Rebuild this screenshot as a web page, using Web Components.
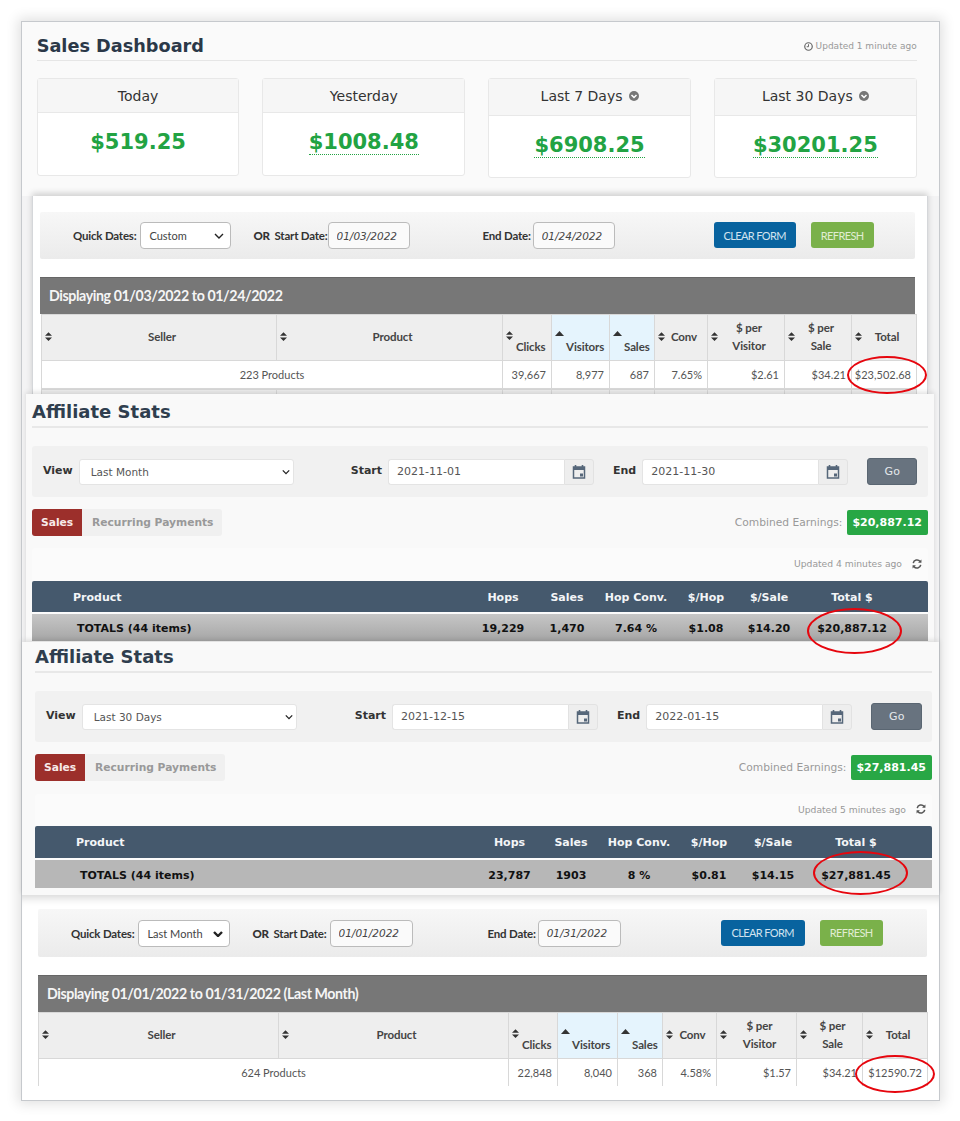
<!DOCTYPE html>
<html lang="en">
<head>
<meta charset="utf-8">
<title>Sales Dashboard</title>
<style>
	html, body { margin: 0; background: #fff; }
	body { padding: 21px 20px 20px 21px; width: 919px; font-family: "DejaVu Sans", sans-serif; }
</style>
</head>
<body>
<proof-frame>
	<sales-dashboard></sales-dashboard>

	<date-sheet style="--sheet-h:198px;--sheet-ml:10px;--sheet-mr:11px;--sheet-top:16px;--pad-l:7px;--pad-r:12px;--bar-h:47px;--lead:33px;--sel-w:91px;--date-w:82px;--end-gap:73px;--btn-gap:99px;--clear-w:82px;--or-gap:22px;--or-adj:-2px;--sheet-line:1px;--table-ml:1px"
		quick="Custom" start="01/03/2022" end="01/24/2022"
		heading="Displaying 01/03/2022 to 01/24/2022"
		cols="235,226,49,58,45,53,77,67,65"
		products="223 Products"
		row="39,667|8,977|687|7.65%|$2.61|$34.21|$23,502.68"
		more></date-sheet>

	<affiliate-stats style="--aff-h:248px;--aff-ml:4px;--aff-mr:5px;--aff-pl:6px;--aff-pr:6px;--title-top:6px;--head-h:31px;--tot-h:27px;--tot-bg:linear-gradient(#c6c6c6,#a6a6a6);--card-top:12px;--card-h:33px;--start-ml:57px;--picker-w:206px;--go-w:50px"
		view="Last Month" start="2021-11-01" end="2021-11-30" earnings="$20,887.12"
		updated="Updated 4 minutes ago" cols="440,62,66,72,68,58,108,1fr"
		row="19,229|1,470|7.64 %|$1.08|$14.20|$20,887.12"></affiliate-stats>

	<affiliate-stats style="--aff-h:253px;--aff-ml:0px;--aff-mr:0px;--aff-pl:13px;--aff-pr:7px;--title-top:3px;--head-h:32px;--tot-h:28px;--tot-bg:#b7b7b7;--card-top:13px;--card-h:32px;--start-ml:58px;--picker-w:206px;--go-w:51px"
		view="Last 30 Days" start="2021-12-15" end="2022-01-15" earnings="$27,881.45"
		updated="Updated 5 minutes ago" cols="443,63,60,76,64,64,102,1fr"
		row="23,787|1903|8 %|$0.81|$14.15|$27,881.45"></affiliate-stats>

	<date-sheet style="--sheet-h:205px;--sheet-ml:0px;--sheet-mr:0px;--sheet-top:14px;--pad-l:16px;--pad-r:12px;--bar-h:48px;--lead:33px;--sel-w:92px;--date-w:83px;--end-gap:75px;--btn-gap:100px;--clear-w:84px;--or-gap:22px;--or-adj:1px;--sheet-line:0px;--table-ml:0px;--sheet-inset:inset 0 10px 9px -7px rgba(0,0,0,.16)"
		quick="Last Month" start="01/01/2022" end="01/31/2022" bold-arrow
		heading="Displaying 01/01/2022 to 01/31/2022 (Last Month)"
		cols="240,230,49,60,45,54,80,66,65"
		products="624 Products"
		row="22,848|8,040|368|4.58%|$1.57|$34.21|$12590.72"></date-sheet>

	<red-ring style="left:825px;top:334px;width:76px;height:34px"></red-ring>
	<red-ring style="left:785px;top:586px;width:91px;height:42px"></red-ring>
	<red-ring style="left:791px;top:829px;width:91px;height:40px"></red-ring>
	<red-ring style="left:833px;top:1033px;width:76px;height:34px"></red-ring>
</proof-frame>

<script>
const ICONS = {
	sort: `<svg width="7" height="9" viewBox="0 0 8 10"><path d="M4 0 8 4H0zM0 6h8l-4 4z" fill="#333"/></svg>`,
	sortUp: `<svg width="9" height="5" viewBox="0 0 9 5"><path d="M4.5 0 9 5H0z" fill="#333"/></svg>`,
	clock: `<svg width="9" height="9" viewBox="0 0 12 12"><circle cx="6" cy="6" r="5" fill="none" stroke="#666" stroke-width="1.6"/><path d="M6 3v3.3H3.6" fill="none" stroke="#666" stroke-width="1.3"/></svg>`,
	chevron: `<svg width="10" height="10" viewBox="0 0 10 10"><circle cx="5" cy="5" r="5" fill="#777"/><path d="M2.5 4 5 6.5 7.5 4" fill="none" stroke="#fff" stroke-width="1.5"/></svg>`,
	calendar: `<svg width="14" height="14" viewBox="0 0 14 14"><path d="M3.5 0v2M10.5 0v2" stroke="#56677a" stroke-width="1.6"/><rect x="1.5" y="2" width="11" height="11" fill="none" stroke="#56677a" stroke-width="1.5"/><rect x="1.5" y="2" width="11" height="3" fill="#56677a"/><rect x="8" y="8.5" width="3" height="3" fill="#56677a"/></svg>`,
	refresh: `<svg width="10" height="10" viewBox="0 0 12 12"><path d="M1.5 5A4.6 4.6 0 0 1 9.7 3" fill="none" stroke="#555" stroke-width="1.8"/><path d="M11.3 .6v4H7.3z" fill="#555"/><path d="M10.5 7A4.6 4.6 0 0 1 2.3 9" fill="none" stroke="#555" stroke-width="1.8"/><path d="M.7 11.4v-4h4z" fill="#555"/></svg>`
};

function arrow(width) {
	return `<svg class="arrow" width="10" height="6" viewBox="0 0 10 6"><path d="M1 1l4 4 4-4" fill="none" stroke="#222" stroke-width="${width}"/></svg>`;
}

/* outer box with the shadow, all the crops stack inside it */
class ProofFrame extends HTMLElement {
	constructor() {
		super();
		this.attachShadow({ mode: 'open' }).innerHTML = `
			<style>
				:host {
					display: flex;
					flex-direction: column;
					position: relative;
					box-sizing: border-box;
					height: 1080px;
					border: 1px solid #c6c9cd;
					background: #f3f3f4;
					box-shadow: 0 0 12px 3px rgba(0,0,0,.12);
				}
			</style>
			<slot></slot>`;
	}
}

class RedRing extends HTMLElement {
	constructor() {
		super();
		this.attachShadow({ mode: 'open' }).innerHTML = `
			<style>
				:host {
					display: block;
					position: absolute;
					z-index: 5;
					border: 2.5px solid #e6060e;
					border-radius: 50%;
				}
			</style>`;
	}
}

class StatCard extends HTMLElement {
	constructor() {
		super();
		this.attachShadow({ mode: 'open' });
	}
	connectedCallback() {
		const dropdown = this.hasAttribute('dropdown');
		const dotted = this.hasAttribute('dotted');
		this.shadowRoot.innerHTML = `
			<style>
				:host {
					display: block;
					box-sizing: border-box;
					height: ${dropdown ? 100 : 98}px;
					border: 1px solid #e8e8e8;
					border-radius: 3px;
					background: #fff;
					color: #333;
				}
				.head {
					display: flex;
					align-items: center;
					justify-content: center;
					gap: 6px;
					box-sizing: border-box;
					height: ${dropdown ? 37 : 34}px;
					padding-bottom: ${dropdown ? 2 : 0}px;
					border-bottom: 1px solid #e8e8e8;
					background: #f6f6f6;
					font-size: 14px;
				}
				.body {
					text-align: center;
					padding-top: 17px;
					font-size: 21px;
					line-height: 25px;
					font-weight: bold;
					color: #22a343;
				}
				.dotted { border-bottom: 1px dotted #22a343; }
			</style>
			<div class="head">${this.getAttribute('label')}${dropdown ? ICONS.chevron : ''}</div>
			<div class="body"><span class="${dotted ? 'dotted' : ''}">${this.getAttribute('value')}</span></div>`;
	}
}

class SalesDashboard extends HTMLElement {
	constructor() {
		super();
		this.attachShadow({ mode: 'open' }).innerHTML = `
			<style>
				:host {
					display: block;
					box-sizing: border-box;
					height: 174px;
					padding: 11px 22.3px 0 14.7px;
					background: #fafafa;
				}
				.top {
					display: flex;
					justify-content: space-between;
					align-items: center;
					height: 26px;
					padding-bottom: 1px;
					border-bottom: 1px solid #e6e6e6;
				}
				h1 { margin: 0; font-size: 17.7px; line-height: 24px; color: #2b3848; }
				.updated { display: flex; align-items: center; gap: 3px; font-size: 9px; color: #999; }
				.cards {
					display: grid;
					grid-template-columns: repeat(4, 1fr);
					column-gap: 23px;
					align-items: start;
					margin-top: 17px;
				}
			</style>
			<div class="top">
				<h1>Sales Dashboard</h1>
				<span class="updated">${ICONS.clock} Updated 1 minute ago</span>
			</div>
			<div class="cards">
				<stat-card label="Today" value="$519.25"></stat-card>
				<stat-card label="Yesterday" value="$1008.48" dotted></stat-card>
				<stat-card label="Last 7 Days" value="$6908.25" dotted dropdown></stat-card>
				<stat-card label="Last 30 Days" value="$30201.25" dotted dropdown></stat-card>
			</div>`;
	}
}

/* the white crops: filter bar, grey title, report table */
class DateSheet extends HTMLElement {
	constructor() {
		super();
		this.attachShadow({ mode: 'open' });
	}
	connectedCallback() {
		const a = n => this.getAttribute(n);
		const cols = a('cols').split(',');
		const row = a('row').split('|');
		const th = (label, extra = '', up = false) =>
			`<th class="${extra}"><div class="th">${up ? ICONS.sortUp : ICONS.sort}<span>${label}</span></div></th>`;
		const filler = cols.map(() => '<td></td>').join('');
		this.shadowRoot.innerHTML = `
			<style>
				:host {
					display: block;
					box-sizing: border-box;
					height: var(--sheet-h);
					margin: 0 var(--sheet-mr) 0 var(--sheet-ml);
					padding: var(--sheet-top) var(--pad-r) 0 var(--pad-l);
					background: #fff;
					overflow: hidden;
					font-family: Lato, sans-serif;
					color: #333;
					box-shadow: var(--sheet-inset, 0 -3px 6px rgba(0,0,0,.16));
					border-left: var(--sheet-line) solid #d5d7da;
					border-right: var(--sheet-line) solid #d5d7da;
				}
				.bar {
					display: flex;
					align-items: center;
					height: var(--bar-h);
					padding-left: var(--lead);
					border-radius: 2px;
					background: linear-gradient(#f7f7f7, #ebebeb);
					font-size: 11.5px;
					font-weight: bold;
					letter-spacing: -.2px;
				}
				.sel { position: relative; display: flex; margin-left: 4px; }
				select {
					appearance: none;
					box-sizing: border-box;
					width: var(--sel-w);
					height: 27px;
					padding: 0 8px;
					border: 1px solid #bbb;
					border-radius: 4px;
					background: #fff;
					font: 11px Lato, sans-serif;
					color: #444;
				}
				.arrow { position: absolute; right: 7px; top: 11px; pointer-events: none; }
				.or { margin: 0 var(--or-adj) 0 var(--or-gap); }
				.or b { margin-right: 2px; }
				input {
					box-sizing: border-box;
					width: var(--date-w);
					height: 27px;
					margin-left: 2px;
					padding: 0 8px;
					border: 1px solid #bbb;
					border-radius: 4px;
					background: #fafafa;
					font: italic 10.5px "DejaVu Sans", sans-serif;
					color: #444;
				}
				.end { margin-left: var(--end-gap); }
				button {
					height: 26px;
					margin-top: -1px;
					padding: 0;
					border: 0;
					border-radius: 3px;
					font: 11px Lato, sans-serif;
					letter-spacing: -.6px;
					text-transform: uppercase;
				}
				.clear { width: var(--clear-w); margin-left: var(--btn-gap); background: #08639f; color: #d3e3ef; }
				.refresh { width: 63px; margin-left: 15px; background: #7ab14a; color: #e0edd3; }
				h2 {
					box-sizing: border-box;
					height: 37px;
					margin: 18px 0 0;
					padding: 0 9px;
					border-top: 1px solid #666;
					background: #777;
					color: #f5f5f5;
					font-size: 14.2px;
					line-height: 35px;
					letter-spacing: -.4px;
				}
				table {
					table-layout: fixed;
					border-collapse: collapse;
					margin-left: var(--table-ml);
				}
				th {
					box-sizing: border-box;
					height: 46px;
					padding: 0 0 2px 3px;
					border: 1px solid #d8d8d8;
					background: #eee;
					font-weight: bold;
					font-size: 11.5px;
					color: #444;
					letter-spacing: -.1px;
				}
				.th { display: flex; align-items: center; gap: 4px; }
				.th span { flex: 1; padding-right: 8px; text-align: center; line-height: 18px; }
				.low .th { align-items: flex-start; }
				.low .th svg { margin-top: 13px; }
				.low .th span { margin-top: 21px; padding: 0; text-align: left; flex: none; margin-left: -1px; line-height: 16px; }
				.sorted { background: #e5f4fd; }
				.sorted .th { gap: 3px; }
				td {
					height: 27px;
					padding: 0 5px 0 0;
					border: 1px solid #d8d8d8;
					border-bottom-width: 2px;
					text-align: right;
					color: #555;
					font-size: 11px;
				}
				td.all { text-align: center; padding: 0; }
				.filler td { background: #eee; }
				.none td { border-bottom: 0; }
			</style>
			<div class="bar">
				<label>Quick Dates:</label>
				<span class="sel"><select><option>${a('quick')}</option></select>${arrow(this.hasAttribute('bold-arrow') ? 2.4 : 1.4)}</span>
				<label class="or"><b>OR</b> Start Date:</label>
				<input value="${a('start')}">
				<label class="end">End Date:</label>
				<input value="${a('end')}">
				<button class="clear">Clear Form</button>
				<button class="refresh">Refresh</button>
			</div>
			<h2>${a('heading')}</h2>
			<table class="${this.hasAttribute('more') ? '' : 'none'}" style="width:${cols.reduce((s, c) => s + +c, 0)}px">
				<colgroup>${cols.map(c => `<col style="width:${c}px">`).join('')}</colgroup>
				<thead><tr>
					${th('Seller')}${th('Product')}${th('Clicks', 'low')}
					${th('Visitors', 'low sorted', true)}${th('Sales', 'low sorted', true)}
					${th('Conv')}${th('$ per<br>Visitor')}${th('$ per<br>Sale')}${th('Total')}
				</tr></thead>
				<tbody>
					<tr><td class="all" colspan="2">${a('products')}</td>${row.map(v => `<td>${v}</td>`).join('')}</tr>
					${this.hasAttribute('more') ? `<tr class="filler">${filler}</tr>` : ''}
				</tbody>
			</table>`;
	}
}

/* the grey crops: filter bar with date pickers, tabs, totals table */
class AffiliateStats extends HTMLElement {
	constructor() {
		super();
		this.attachShadow({ mode: 'open' });
	}
	connectedCallback() {
		const a = n => this.getAttribute(n);
		const row = a('row').split('|');
		const cols = a('cols').split(',').map(c => c === '1fr' ? c : c + 'px').join(' ');
		const picker = value => `<span class="picker"><input value="${value}"><span class="addon">${ICONS.calendar}</span></span>`;
		this.shadowRoot.innerHTML = `
			<style>
				:host {
					display: block;
					box-sizing: border-box;
					height: var(--aff-h);
					margin: 0 var(--aff-mr) 0 var(--aff-ml);
					padding: var(--title-top) var(--aff-pr) 0 var(--aff-pl);
					background: #f9f9f9;
					font-size: 11px;
					color: #333;
					box-shadow: 0 -2px 5px rgba(0,0,0,.12);
				}
				h1 {
					margin: 0;
					padding-bottom: 2px;
					border-bottom: 2px solid #e8e8e8;
					font-size: 18px;
					line-height: 24px;
					color: #2f3e4e;
				}
				.bar {
					display: flex;
					align-items: center;
					height: 51px;
					margin-top: 18px;
					padding-left: 11px;
					border-radius: 3px;
					background: #f1f1f1;
				}
				label { font-weight: bold; margin-top: -2px; }
				.sel { position: relative; display: flex; margin-left: 6px; }
				select {
					appearance: none;
					box-sizing: border-box;
					width: 215px;
					height: 26px;
					padding: 0 11px;
					border: 1px solid #e4e4e4;
					border-radius: 3px;
					background: #fff;
					font: 10.5px "DejaVu Sans", sans-serif;
					color: #555;
				}
				.arrow { position: absolute; right: 4px; top: 10px; width: 8px; pointer-events: none; }
				.start { margin-left: var(--start-ml); }
				.end { margin-left: 19px; }
				.picker { display: flex; width: var(--picker-w); height: 26px; margin-left: 6px; }
				.picker input {
					box-sizing: border-box;
					flex: 1;
					min-width: 0;
					padding: 0 8px;
					border: 1px solid #e4e4e4;
					border-right: 0;
					border-radius: 3px 0 0 3px;
					background: #fff;
					font: 11px "DejaVu Sans", sans-serif;
					color: #555;
				}
				.addon {
					display: flex;
					align-items: center;
					justify-content: center;
					width: 28px;
					border: 1px solid #e2e2e2;
					border-radius: 0 3px 3px 0;
					background: #eeeeee;
				}
				button {
					width: var(--go-w);
					height: 27px;
					margin-left: 19px;
					border: 1px solid #5a6672;
					border-radius: 3px;
					background: #68737f;
					color: #e4e8ec;
					font: 11px "DejaVu Sans", sans-serif;
				}
				.mid { display: flex; justify-content: space-between; align-items: center; margin-top: 12px; height: 27px; }
				.tabs { display: flex; height: 27px; border-radius: 3px; background: #f0f0f0; font-size: 10.7px; font-weight: bold; line-height: 27px; }
				.tabs span { padding: 0 9px 0 10px; color: #999; }
				.tabs .on { width: 50px; padding: 0 0 0 9px; box-sizing: border-box; border-radius: 3px 0 0 3px; background: #9c2f2b; color: #f7e9e8; }
				.earn { display: flex; align-items: center; gap: 5px; color: #999; font-size: 10.7px; }
				.earn b { padding: 0 6px 0 5px; height: 25px; line-height: 25px; border-radius: 2px; background: #28a745; color: #fff; font-size: 11px; }
				.card { margin-top: var(--card-top); background: #fbfbfb; border-radius: 3px 3px 0 0; }
				.upd {
					display: flex;
					justify-content: flex-end;
					align-items: center;
					gap: 10px;
					height: var(--card-h);
					padding: 0 6px 2px 0;
					box-sizing: border-box;
					font-size: 9.2px;
					color: #999;
				}
				.grid { display: grid; grid-template-columns: ${cols}; align-items: center; font-weight: bold; text-align: center; box-sizing: border-box; }
				.head { height: var(--head-h); padding-top: 1px; border-radius: 2px 2px 0 0; background: #45596d; color: #f3f5f7; }
				.tot { height: var(--tot-h); padding-top: 2px; margin-top: 2px; background: var(--tot-bg); color: #111; }
				.grid > :first-child { text-align: left; }
				.head > :first-child { padding-left: 41px; }
				.tot > :first-child { padding-left: 45px; }
			</style>
			<h1>Affiliate Stats</h1>
			<div class="bar">
				<label>View</label>
				<span class="sel"><select><option>${a('view')}</option></select>${arrow(1.6)}</span>
				<label class="start">Start</label>${picker(a('start'))}
				<label class="end">End</label>${picker(a('end'))}
				<button>Go</button>
			</div>
			<div class="mid">
				<div class="tabs"><span class="on">Sales</span><span>Recurring Payments</span></div>
				<div class="earn">Combined Earnings: <b>${a('earnings')}</b></div>
			</div>
			<div class="card">
				<div class="upd">${a('updated')} ${ICONS.refresh}</div>
				<div class="grid head">
					<span>Product</span><span>Hops</span><span>Sales</span><span>Hop Conv.</span><span>$/Hop</span><span>$/Sale</span><span>Total $</span><span></span>
				</div>
				<div class="grid tot">
					<span>TOTALS (44 items)</span>${row.map(v => `<span>${v}</span>`).join('')}<span></span>
				</div>
			</div>`;
	}
}

customElements.define('proof-frame', ProofFrame);
customElements.define('red-ring', RedRing);
customElements.define('stat-card', StatCard);
customElements.define('sales-dashboard', SalesDashboard);
customElements.define('date-sheet', DateSheet);
customElements.define('affiliate-stats', AffiliateStats);
</script>
</body>
</html>
